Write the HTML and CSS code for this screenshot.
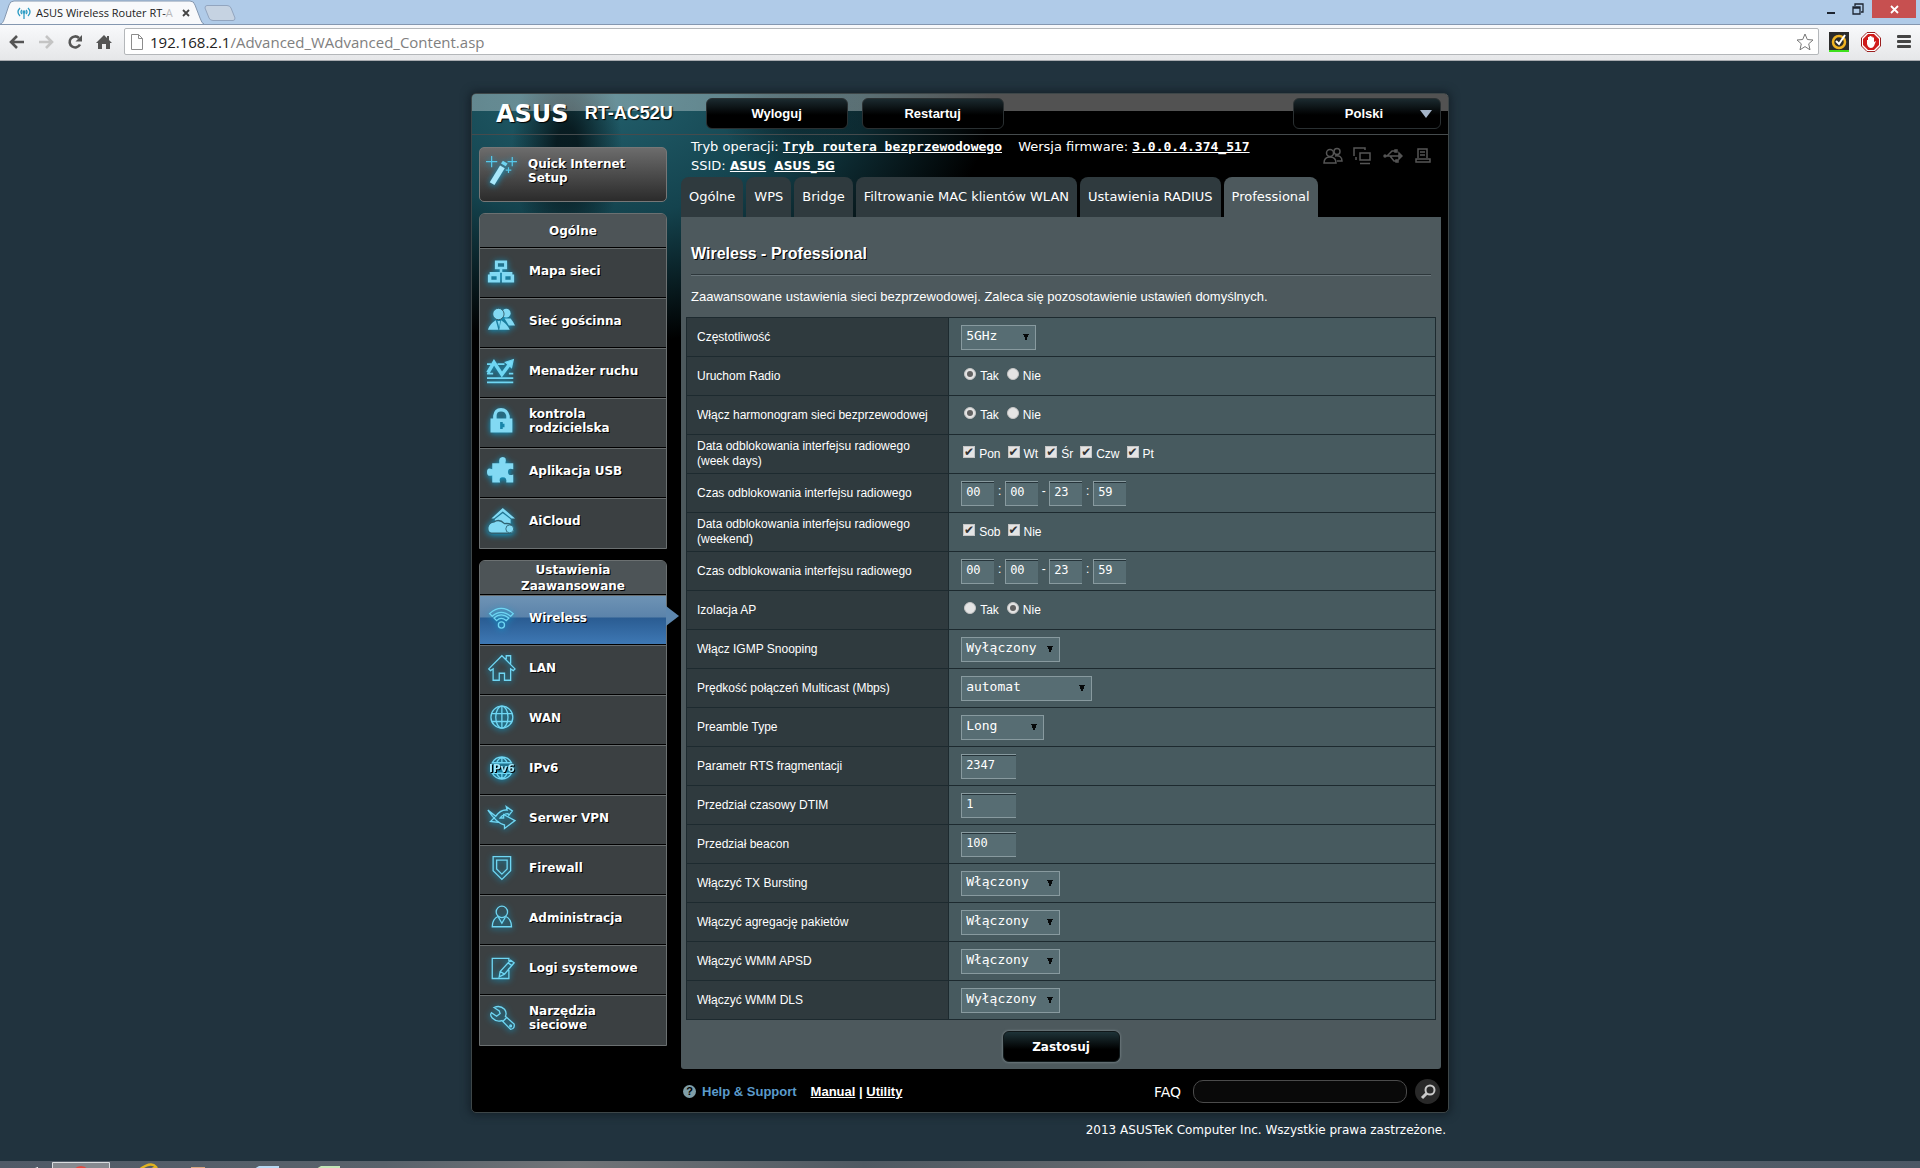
FILE: index.html
```html
<!DOCTYPE html>
<html lang="pl">
<head>
  <meta charset="UTF-8">
  <meta name="viewport" content="width=device-width, initial-scale=1.0">
  <title>ASUS Wireless Router RT-AC52U - Professional</title>
  <link rel="stylesheet" href="styles.css">
</head>
<body>
  <header class="browser">
    <div class="tab-strip">
      <div class="browser-tab">
        <svg class="tab-shape" width="204" height="24" viewBox="0 0 204 24"><path d="M0 24C3 24 4 20 6 14L9 5Q10 1 14 1H190Q194 1 195 5L200 18Q202 24 204 24" fill="#f8f9fb" stroke="#8497b0"/></svg>
        <svg class="tab-icon" width="14" height="14" viewBox="0 0 14 14" fill="none" stroke="#2d9cc4" stroke-width="1.3"><path d="M3 2Q-1 6 3 10M5 4Q3 6 5 8M11 2Q15 6 11 10M9 4Q11 6 9 8M7 7V13"/><circle cx="7" cy="6" r="1" fill="#2d9cc4"/></svg>
        <span class="tab-title">ASUS Wireless Router RT-<span class="faded">A</span></span>
        <button class="tab-close" aria-label="Close tab"><svg width="8" height="8" viewBox="0 0 8 8"><path d="M1 1L7 7M7 1L1 7" stroke="#444" stroke-width="1.8"/></svg></button>
      </div>
      <button class="new-tab" aria-label="New tab"><svg width="32" height="16" viewBox="0 0 32 16"><path d="M3 .5H23Q26 .5 27 3L31 13Q31 15.500 29 15.500H9Q6 15.500 5 13L1 3Q1 .5 3 .5" fill="#c6d3e2" stroke="#92a5bf"/></svg></button>
      <div class="window-buttons">
        <button aria-label="Minimize"><svg width="10" height="12" viewBox="0 0 10 12"><path d="M1 10H9" stroke="#1d2530" stroke-width="2"/></svg></button>
        <button aria-label="Restore"><svg width="12" height="12" viewBox="0 0 12 12" fill="none" stroke="#1d2530" stroke-width="1.300"><path d="M1 4H8V11H1ZM1 5H8M3 3V1H11V9H9"/></svg></button>
        <button class="close" aria-label="Close"><svg width="9" height="9" viewBox="0 0 9 9"><path d="M1 1L8 8M8 1L1 8" stroke="#fff" stroke-width="1.800"/></svg></button>
      </div>
    </div>
    <div class="toolbar">
      <button aria-label="Back"><svg width="16" height="16" viewBox="0 0 16 16" fill="none" stroke="#555" stroke-width="2.600"><path d="M15 8H2M8 2L2 8L8 14"/></svg></button>
      <button aria-label="Forward"><svg width="16" height="16" viewBox="0 0 16 16" fill="none" stroke="#c4c4c4" stroke-width="2.600"><path d="M1 8H14M8 2L14 8L8 14"/></svg></button>
      <button aria-label="Reload"><svg width="16" height="16" viewBox="0 0 16 16"><path d="M13 10.500A5.500 5.500 0 1 1 12 4" fill="none" stroke="#555" stroke-width="2.600"/><path d="M15 1V7.500H8.500Z" fill="#555"/></svg></button>
      <button aria-label="Home"><svg width="16" height="16" viewBox="0 0 16 16"><path d="M8 1L0 9H2V15H6V10H10V15H14V9H16L13 6V2H11V4Z" fill="#555"/></svg></button>
      <div class="address">
        <svg width="12" height="16" viewBox="0 0 12 16" fill="#fff" stroke="#8c8c8c"><path d="M.5 .5H7.500L11.500 4.500V15.500H.5ZM7.500 .5V4.500H11.500"/></svg>
        <span class="url"><b>192.168.2.1</b>/Advanced_WAdvanced_Content.asp</span>
        <svg class="star" width="18" height="18" viewBox="0 0 18 18"><path d="M9 1L11.300 6.500L17 7L12.700 10.800L14 16.800L9 13.600L4 16.800L5.300 10.800L1 7L6.700 6.500Z" fill="#fff" stroke="#777" stroke-linejoin="round"/></svg>
      </div>
      <svg class="ext" width="20" height="20" viewBox="0 0 20 20"><path fill="#2b2b2b" d="M0 0H20V18H0Z"/><path fill="#3de01c" d="M0 18H20V20H0Z"/><circle cx="10" cy="10" r="6" fill="none" stroke="#f0b323" stroke-width="2.500"/><path d="M7 9L10 12L16 3" fill="none" stroke="#fff" stroke-width="2"/></svg>
      <svg class="ext" width="20" height="20" viewBox="0 0 20 20"><path d="M6 .5H14L19.500 6V14L14 19.500H6L.5 14V6Z" fill="#fff" stroke="#9b2020"/><path d="M7 2H13L18 7V13L13 18H7L2 13V7Z" fill="#cf1b1b"/><path d="M6 8H7V5H8.500V4H10V4.500H11.500V5.500H13V10L15 9L13 14Q12 16 10 16Q7 16 6 12Z" fill="#fff"/></svg>
      <button class="menu-button" aria-label="Menu"><svg width="14" height="13" viewBox="0 0 14 13"><path d="M1 1.500H13M1 6.500H13M1 11.500H13" stroke="#444" stroke-width="2.800" stroke-linecap="round"/></svg></button>
    </div>
  </header>

  <main class="page">
    <div class="router">
      <div class="top-banner">
        <span class="logo">ASUS</span>
        <span class="model">RT-AC52U</span>
        <button class="banner-button">Wyloguj</button>
        <button class="banner-button">Restartuj</button>
        <button class="banner-button language">Polski</button>
      </div>

      <div class="router-body">
        <nav class="sidebar">
          <a class="quick-setup" href="#">
            <svg class="icon" viewBox="0 0 32 32"><path d="M4 28L15 10L20 13L9 31Z" fill="#a9e8fb"/><path d="M16 8L18 5L23 8L21 11Z" fill="#6fd3f0"/><path d="M6 0V12M0 6H12M28 1V11M23 6H33M24 12V18M21 15H27" stroke="#55c8ea" stroke-width="1.300"/></svg>
            Quick Internet Setup
          </a>

          <div class="menu">
            <h2>Ogólne</h2>
            <a href="#"><svg class="icon solid" viewBox="0 0 32 32"><path fill-rule="evenodd" d="M9 4H23V14H17.500V17H29V20H31V29H17V18H15V29H1V20H3V17H14.500V14H9ZM12.500 7V11H19.500V7ZM5 22V26H11V22ZM21 22V26H27V22Z"/></svg>Mapa sieci</a>
            <a href="#"><svg class="icon solid" viewBox="0 0 32 32"><circle cx="22" cy="7" r="5"/><path d="M20 13L27 13Q31 18 32 21H25Z"/><circle cx="13" cy="8" r="6.500" stroke="#31545f"/><path d="M10 15L13 26H1Q3 19 10 15ZM16 15L14 26H26Q23 19 16 15Z"/><path d="M12 16H15L14 23Z"/></svg>Sieć gościnna</a>
            <a href="#"><svg class="icon line" viewBox="0 0 32 32"><path d="M0 8H5M12 8H20M0 24H30M0 29H30M0 19H7M25 19H30" stroke-width="2"/><path d="M1 18L8 6L17 20L26 8" stroke-width="4"/><path d="M21 6L30 3L28 12Z" fill="#78dcf8"/></svg>Menadżer ruchu</a>
            <a href="#"><svg class="icon solid" viewBox="0 0 32 32"><path fill-rule="evenodd" d="M4 13H7V10Q8 1 16 1T26 10V13H29V29H4ZM11 13H22V10Q21 5 16 5T11 10ZM15 17V25H18V23H20V19H18V17Z"/></svg>kontrola<br>rodzicielska</a>
            <a href="#"><svg class="icon solid" viewBox="0 0 32 32"><path d="M6 7H14Q13 0 18 0T21 7H30V14Q24 12 24 17T30 20V29H22Q23 23 18 23T15 29H6V21Q0 23 0 17T6 14Z"/></svg>Aplikacja USB</a>
            <a href="#"><svg class="icon solid" viewBox="0 0 32 32"><path d="M18 1L32 13H28L18 5L8 13H5Z"/><path d="M18 7L27 14V22H9V14Z"/><path d="M5 30Q0 29 1 23Q2 18 8 17Q14 13 20 19Q28 18 30 23Q33 30 26 30Z" stroke="#2f6272" stroke-width="1.500"/><circle cx="26" cy="25" r="4.500" stroke="#2f6272"/></svg>AiCloud</a>
          </div>

          <div class="menu">
            <h2>Ustawienia Zaawansowane</h2>
            <a class="active" href="#"><svg class="icon line" viewBox="0 0 32 32"><path d="M3 11Q16 -1 30 11L27 14Q16 5 6 14ZM8 16Q16 9 25 16L22 19Q16 14 11 19Z"/><circle cx="16.500" cy="24" r="3.500"/></svg>Wireless</a>
            <a href="#"><svg class="icon line" viewBox="0 0 32 32"><path d="M2 17L17 2L32 17L30 19L27 17V30H20V22H14V30H7V17L4 19ZM22 6V2H27V11"/></svg>LAN</a>
            <a href="#"><svg class="icon line" viewBox="0 0 32 32"><circle cx="17" cy="15" r="12.500"/><path d="M17 3V27M5 11H29M5 20H29"/><ellipse cx="17" cy="15" rx="7" ry="12.500"/></svg>WAN</a>
            <a href="#"><svg class="icon line" viewBox="0 0 32 32"><path d="M6 10A12.500 12.500 0 0 1 28 10ZM6 22A12.500 12.500 0 0 0 28 22ZM17 4V10M17 22V28M11 10Q13 5 17 4Q21 5 23 10M11 22Q13 27 17 28Q21 27 23 22"/><text x="17" y="20" text-anchor="middle" class="icon-text">IPv6</text></svg>IPv6</a>
            <a href="#"><svg class="icon line" viewBox="0 0 32 32"><path d="M1 7L10 14Q16 6 23 7L22 3L29 8L25 13L24 11Q19 11 15 16H19V12L32 19L20 28V24Q11 22 1 7ZM9 15L4 20L13 21"/></svg>Serwer VPN</a>
            <a href="#"><svg class="icon line" viewBox="0 0 32 32"><path d="M7 3H27V19L17 29L7 19ZM11 7H23V17L17 23L11 17Z"/></svg>Firewall</a>
            <a href="#"><svg class="icon line" viewBox="0 0 32 32"><circle cx="17" cy="9" r="6.500"/><path d="M13 14Q6 17 6 26H28Q28 17 21 14M13 15L17 22L21 15"/></svg>Administracja</a>
            <a href="#"><svg class="icon line" viewBox="0 0 32 32"><path d="M25 16V28H6V5H25V8M14 26L15 20L27 7L31 10L20 23ZM15 20L20 23M24 10L28 13"/></svg>Logi systemowe</a>
            <a href="#"><svg class="icon line" viewBox="0 0 32 32"><path d="M8 4Q15 1 20 6Q23 10 21 14L31 23Q32 28 27 29L17 19Q11 21 6 16Q3 13 5 10L11 14L15 11L14 8ZM18 20L22 16"/><circle cx="27" cy="25" r="1"/></svg>Narzędzia<br>sieciowe</a>
          </div>
        </nav>

        <section class="content">
          <div class="status">
            <div class="status-text">
              <p>Tryb operacji: <a href="#">Tryb routera bezprzewodowego</a> <span class="firmware">Wersja firmware: <a href="#">3.0.0.4.374_517</a></span></p>
              <p>SSID: <a class="ssid" href="#">ASUS</a> <a class="ssid" href="#">ASUS_5G</a></p>
            </div>
            <div class="status-icons">
              <svg viewBox="0 0 20 18"><circle cx="7" cy="6" r="3.500"/><circle cx="14" cy="4.500" r="3"/><path d="M1 16Q1 10 7 10T13 16ZM12 9Q19 8 19 14H14"/></svg>
              <svg viewBox="0 0 20 18"><path d="M1 9V1H12V3M3 10V13M7 6H17V13H7ZM7 16.500H17"/></svg>
              <svg viewBox="0 0 20 18"><path d="M1 9H18M4 9L9 4H13M7 9L11 14H14M16 6L19 9L16 12Z"/><circle cx="2" cy="9" r="1"/><path d="M12 3H14V5H12ZM13 13H15V15H13Z"/></svg>
              <svg viewBox="0 0 20 18"><path d="M5 11V2H14V11M7 5H12M7 8H12M3 12H17V15H3Z"/></svg>
            </div>
          </div>

          <nav class="tabs">
            <a href="#">Ogólne</a>
            <a href="#">WPS</a>
            <a href="#">Bridge</a>
            <a href="#">Filtrowanie MAC klientów WLAN</a>
            <a href="#">Ustawienia RADIUS</a>
            <a class="current" href="#">Professional</a>
          </nav>

          <form class="panel">
            <h1>Wireless - Professional</h1>
            <p class="description">Zaawansowane ustawienia sieci bezprzewodowej. Zaleca się pozosotawienie ustawień domyślnych.</p>

            <table class="settings">
              <tr>
                <th><label for="band">Częstotliwość</label></th>
                <td><select id="band" class="w-band"><option>2.4GHz</option><option selected>5GHz</option></select></td>
              </tr>
              <tr>
                <th>Uruchom Radio</th>
                <td><div class="choices"><label><input type="radio" name="radio" checked>Tak</label><label><input type="radio" name="radio">Nie</label></div></td>
              </tr>
              <tr>
                <th>Włącz harmonogram sieci bezprzewodowej</th>
                <td><div class="choices"><label><input type="radio" name="schedule" checked>Tak</label><label><input type="radio" name="schedule">Nie</label></div></td>
              </tr>
              <tr>
                <th>Data odblokowania interfejsu radiowego (week days)</th>
                <td><div class="choices"><label><input type="checkbox" checked>Pon</label><label><input type="checkbox" checked>Wt</label><label><input type="checkbox" checked>Śr</label><label><input type="checkbox" checked>Czw</label><label><input type="checkbox" checked>Pt</label></div></td>
              </tr>
              <tr>
                <th>Czas odblokowania interfejsu radiowego</th>
                <td><div class="time-range"><input type="text" value="00" aria-label="Od, godzina"><span>:</span><input type="text" value="00" aria-label="Od, minuta"><span>-</span><input type="text" value="23" aria-label="Do, godzina"><span>:</span><input type="text" value="59" aria-label="Do, minuta"></div></td>
              </tr>
              <tr>
                <th>Data odblokowania interfejsu radiowego (weekend)</th>
                <td><div class="choices"><label><input type="checkbox" checked>Sob</label><label><input type="checkbox" checked>Nie</label></div></td>
              </tr>
              <tr>
                <th>Czas odblokowania interfejsu radiowego</th>
                <td><div class="time-range"><input type="text" value="00" aria-label="Weekend od, godzina"><span>:</span><input type="text" value="00" aria-label="Weekend od, minuta"><span>-</span><input type="text" value="23" aria-label="Weekend do, godzina"><span>:</span><input type="text" value="59" aria-label="Weekend do, minuta"></div></td>
              </tr>
              <tr>
                <th>Izolacja AP</th>
                <td><div class="choices"><label><input type="radio" name="isolation">Tak</label><label><input type="radio" name="isolation" checked>Nie</label></div></td>
              </tr>
              <tr>
                <th><label for="igmp">Włącz IGMP Snooping</label></th>
                <td><select id="igmp"><option>Wyłączony</option><option>Włączony</option></select></td>
              </tr>
              <tr>
                <th><label for="multicast">Prędkość połączeń Multicast (Mbps)</label></th>
                <td><select id="multicast" class="w-multicast"><option>automat</option></select></td>
              </tr>
              <tr>
                <th><label for="preamble">Preamble Type</label></th>
                <td><select id="preamble" class="w-preamble"><option>Long</option><option>Short</option></select></td>
              </tr>
              <tr>
                <th><label for="rts">Parametr RTS fragmentacji</label></th>
                <td><input type="text" id="rts" value="2347"></td>
              </tr>
              <tr>
                <th><label for="dtim">Przedział czasowy DTIM</label></th>
                <td><input type="text" id="dtim" value="1"></td>
              </tr>
              <tr>
                <th><label for="beacon">Przedział beacon</label></th>
                <td><input type="text" id="beacon" value="100"></td>
              </tr>
              <tr>
                <th><label for="burst">Włączyć TX Bursting</label></th>
                <td><select id="burst"><option>Włączony</option><option>Wyłączony</option></select></td>
              </tr>
              <tr>
                <th><label for="aggregation">Włączyć agregację pakietów</label></th>
                <td><select id="aggregation"><option>Włączony</option><option>Wyłączony</option></select></td>
              </tr>
              <tr>
                <th><label for="apsd">Włączyć WMM APSD</label></th>
                <td><select id="apsd"><option>Włączony</option><option>Wyłączony</option></select></td>
              </tr>
              <tr>
                <th><label for="dls">Włączyć WMM DLS</label></th>
                <td><select id="dls"><option>Wyłączony</option><option>Włączony</option></select></td>
              </tr>
            </table>

            <button type="button" class="apply">Zastosuj</button>
          </form>

          <div class="help-bar">
            <span class="help-icon">?</span>
            <span class="help-title">Help &amp; Support</span>
            <span class="help-links"><a href="#">Manual</a> | <a href="#">Utility</a></span>
            <label class="faq-label" for="faq">FAQ</label>
            <input type="text" id="faq" class="faq-input">
            <button class="search-button" aria-label="Szukaj"><svg width="16" height="16" viewBox="0 0 16 16" fill="none" stroke="#c9c9c9"><circle cx="10" cy="6" r="4.500" stroke-width="2"/><path d="M7 9L2 14" stroke-width="3"/></svg></button>
          </div>
        </section>
      </div>
    </div>
    <p class="copyright">2013 ASUSTeK Computer Inc. Wszystkie prawa zastrzeżone.</p>
  </main>

  <footer class="taskbar">
    <svg width="340" height="8" viewBox="0 0 340 8"><path d="M32 8L38 6V8Z" fill="#fff"/><path d="M52.500 9V1.500H109.500V9" fill="#85898f" stroke="#d9dcdf"/><path d="M74 8Q81 2 88 8Z" fill="#e2493f"/><path d="M139 9Q151 0 156 6L150 9" fill="none" stroke="#e0b321" stroke-width="2.500"/><path d="M191 6H205V8H191Z" fill="#d8a781"/><path d="M254 8L259 5H279V8Z" fill="#b9d9f3"/><path d="M316 8L321 5H341V8Z" fill="#c5e6b8"/></svg>
  </footer>
</body>
</html>
```
FILE: styles.css
```css
* {
  box-sizing: border-box;
}
body {
  display: flex;
  flex-direction: column;
  min-height: 100vh;
  margin: 0;
  background: #21333e;
  color: #fff;
  font-family: "Liberation Sans", Arial, sans-serif;
  font-size: 12px;
}
h1, h2, p {
  margin: 0;
}
a {
  color: #fff;
}
button {
  padding: 0;
  border: none;
  background: none;
  color: inherit;
  cursor: pointer;
}
svg {
  display: block;
}

/* browser window */
.browser {
  font-family: "Open Sans", "Noto Sans", sans-serif;
  color: #222;
}
.tab-strip {
  display: flex;
  align-items: flex-start;
  height: 24px;
  background: #b0cbe8;
}
.browser-tab {
  position: relative;
  display: flex;
  align-items: center;
  gap: 5px;
  width: 204px;
  height: 24px;
  padding: 1px 14px 0 17px;
}
.tab-shape {
  position: absolute;
  left: 0;
  top: 0;
}
.tab-icon, .tab-title, .tab-close {
  position: relative;
}
.tab-title {
  flex: 1;
  font-size: 11px;
  white-space: nowrap;
}
.faded {
  color: #bbb;
}
.new-tab {
  margin-top: 5px;
}
.window-buttons {
  display: flex;
  align-items: center;
  gap: 16px;
  height: 18px;
  margin-left: auto;
  padding-right: 4px;
}
.window-buttons .close {
  display: flex;
  align-items: center;
  justify-content: center;
  width: 44px;
  height: 18px;
  margin-left: -8px;
  background: #c75050;
}
.toolbar {
  display: flex;
  align-items: center;
  gap: 13px;
  height: 37px;
  padding: 0 9px 2px;
  border-top: 1px solid #8497b0;
  border-bottom: 1px solid #a9acb0;
  background: linear-gradient(#f8f9fb, #e6e7e9);
}
.address {
  display: flex;
  flex: 1;
  align-items: center;
  gap: 7px;
  height: 27px;
  margin: 0 -3px 0 -1px;
  padding: 0 4px 0 6px;
  border: 1px solid #b4b7ba;
  border-radius: 2px;
  background: #fff;
}
.url {
  flex: 1;
  color: #808080;
  font-size: 15px;
}
.url b {
  color: #222;
  font-weight: normal;
}
.toolbar .ext {
  margin-right: -1px;
}
.menu-button {
  margin-left: 4px;
}

/* router window */
.page {
  flex: 1;
  padding: 32px 20px 23px;
  background: #21333e;
}
.router {
  max-width: 978px;
  margin: 0 auto;
  border: 1px solid #3d4648;
  border-radius: 5px;
  background:
    radial-gradient(ellipse 55px 110px at 95px 55px, rgba(5, 18, 22, 0.85) 20%, transparent),
    radial-gradient(ellipse 70px 60px at 320px 20px, rgba(5, 18, 22, 0.5), transparent),
    radial-gradient(ellipse 400px 250px at 120px 0, #23616e, #14434e 50%, transparent),
    #000;
  box-shadow: 0 0 8px 2px #15212a;
}
.top-banner {
  display: flex;
  align-items: center;
  height: 41px;
  padding: 0 7px 1px 24px;
  border-bottom: 1px solid #454b4d;
  border-radius: 4px 4px 0 0;
  background: linear-gradient(rgba(255, 255, 255, 0.32) 17px, transparent 17px);
}
.logo {
  font: bold 24px "DejaVu Sans", sans-serif;
  text-shadow: 1px 1px 1px #000;
}
.model {
  flex: 0 1 121px;
  margin-left: 16px;
  font-size: 18px;
  font-weight: bold;
  text-shadow: 1px 1px 1px #000;
}
.banner-button {
  width: 142px;
  height: 31px;
  margin-right: 14px;
  border: 1px solid #2a3032;
  border-radius: 6px;
  background: linear-gradient(#1b2a2f, #000 55%);
  font: bold 13px "Liberation Sans", Arial, sans-serif;
}
.language {
  position: relative;
  width: 148px;
  margin: 0 0 0 auto;
  padding-right: 6px;
}
.language::after {
  content: "";
  position: absolute;
  top: 11px;
  right: 8px;
  border: 6px solid transparent;
  border-top: 8px solid #a4b4c8;
  border-bottom: none;
}
.router-body {
  display: flex;
  gap: 14px;
  padding: 0 7px;
}

/* left menu */
.sidebar {
  flex: 0 0 188px;
  padding-top: 12px;
  font-family: "DejaVu Sans", Verdana, sans-serif;
  font-weight: bold;
  line-height: 14px;
  text-shadow: 1px 1px 0 #000;
}
.quick-setup, .menu a {
  display: flex;
  align-items: center;
  gap: 12px;
  padding: 0 12px 0 6px;
  text-decoration: none;
}
.quick-setup {
  height: 55px;
  padding: 0 30px 8px 6px;
  border: 1px solid #777;
  border-radius: 5px;
  background: linear-gradient(#6c6c6c, #2b2b2b);
}
.icon {
  flex: 0 0 30px;
  height: 30px;
  overflow: visible;
  filter: drop-shadow(0 1px 3px #0aa3d6);
}
.solid {
  fill: #82d9f3;
}
.line {
  fill: none;
  stroke: #6fd6f3;
  stroke-width: 1.5;
}
.icon-text {
  fill: #a5e9fb;
  stroke: none;
  font-size: 12px;
}
.menu {
  margin-top: 11px;
  border: 1px solid #6b7071;
  border-radius: 6px 6px 0 0;
  background: #3b4042;
}
.menu h2 {
  display: flex;
  align-items: center;
  justify-content: center;
  height: 33px;
  padding: 0 30px;
  border-radius: 5px 5px 0 0;
  background: #4d5457;
  font-size: 12px;
  line-height: 16px;
  text-align: center;
}
.menu a {
  gap: 14px;
  height: 50px;
  padding: 0 6px 4px 7px;
  border-top: 1px solid #000;
  box-shadow: inset 0 1px #686d6e;
}
.menu a:last-child {
  height: 51px;
}
.menu .icon {
  flex-basis: 28px;
  height: 28px;
}
.menu .active {
  position: relative;
  background: linear-gradient(#6f94b5 0, #5b83aa 22px, #2a5c92 23px, #3e78b4);
}
.menu .active::after {
  content: "";
  position: absolute;
  top: 11px;
  left: 100%;
  border: 10px solid transparent;
  border-left: 13px solid #5d87af;
  border-right: none;
}

/* status and tabs */
.content {
  flex: 1;
  min-width: 0;
}
.status {
  display: flex;
  justify-content: space-between;
  height: 42px;
  padding: 2px 8px 0 10px;
  font-family: "DejaVu Sans", Verdana, sans-serif;
  font-size: 13px;
  line-height: 19px;
}
.status a {
  font: bold 13px "DejaVu Sans Mono", "Lucida Console", monospace;
}
.status .ssid {
  margin-right: 4px;
  font: bold 12px "DejaVu Sans", Verdana, sans-serif;
}
.firmware {
  margin-left: 12px;
}
.status-icons {
  display: flex;
  gap: 10px;
  padding-top: 10px;
}
.status-icons svg {
  width: 20px;
  height: 18px;
  fill: none;
  stroke: #555;
  stroke-width: 1.5;
}
.tabs {
  display: flex;
  gap: 3px;
  font-family: "DejaVu Sans", Verdana, sans-serif;
  font-size: 13px;
}
.tabs a {
  height: 40px;
  padding: 0 8px;
  border-radius: 8px 8px 0 0;
  background: #2f3a3e;
  line-height: 40px;
  text-decoration: none;
  white-space: nowrap;
}
.tabs .current {
  background: #4d595d;
}

/* settings */
.panel {
  padding: 25px 5px 7px;
  border-radius: 0 0 3px 3px;
  background: #4d595d;
}
.panel h1 {
  margin: 0 5px;
  padding-bottom: 8px;
  border-bottom: 1px solid #2d373b;
  box-shadow: 0 1px #69757a;
  font-size: 16px;
  line-height: 24px;
  text-shadow: 1px 1px 0 #000;
}
.description {
  margin: 12px 5px 10px;
  font-size: 13px;
  line-height: 20px;
}
.settings {
  width: 100%;
  border: 1px solid #1d2a2f;
  border-collapse: collapse;
}
.settings tr {
  height: 39px;
}
.settings th, .settings td {
  padding: 0 10px;
  border: 1px solid #1d2a2f;
  text-align: left;
}
.settings th {
  width: 35%;
  background: #2f3a3e;
  font-weight: normal;
  line-height: 15px;
}
.settings td {
  padding-left: 12px;
  background: #475a5f;
}
select, .panel input[type="text"] {
  display: block;
  height: 25px;
  border: 1px solid #889a9f;
  border-radius: 0;
  background-color: #576d73;
  color: #fff;
  font-family: "DejaVu Sans Mono", "Lucida Console", monospace;
}
select {
  appearance: none;
  width: 99px;
  padding: 0 0 4px 4px;
  background-image:
    linear-gradient(to bottom left, #06090a 50%, transparent 50%),
    linear-gradient(to bottom right, #06090a 50%, transparent 50%);
  background-position: right 9px top 8px, right 6px top 8px;
  background-repeat: no-repeat;
  background-size: 3px 7px;
  font-size: 13px;
}
.w-band {
  width: 75px;
}
.w-multicast {
  width: 131px;
}
.w-preamble {
  width: 83px;
}
.panel input[type="text"] {
  width: 55px;
  padding: 0 0 2px 4px;
  border-right: none;
  box-shadow: inset 0 1px #26343a;
  font-size: 12px;
}
.panel .time-range input {
  width: 33px;
}
.time-range {
  display: flex;
}
.time-range span {
  width: 11px;
  line-height: 20px;
  text-align: center;
}
.choices {
  display: flex;
  gap: 7px;
  padding-left: 2px;
}
.choices label {
  display: flex;
  align-items: flex-start;
  gap: 4px;
  line-height: 19px;
}
.choices input {
  appearance: none;
  display: grid;
  place-content: center;
  width: 12px;
  height: 12px;
  margin: 1px 0 0;
  border: 1px solid #c5c5c5;
  background: #e4e4e4;
}
.choices input[type="radio"] {
  margin-left: 1px;
  border-radius: 50%;
}
.choices input[type="radio"]:checked::before {
  content: "";
  width: 6px;
  height: 6px;
  border-radius: 50%;
  background: #626262;
}
.choices input[type="checkbox"]:checked::before {
  content: "✔";
  color: #333;
  font: 12px/10px "DejaVu Sans", sans-serif;
}
.apply {
  display: block;
  width: 117px;
  height: 31px;
  margin: 11px auto 0;
  border: 1px solid #10181a;
  border-radius: 6px;
  background: linear-gradient(#1e3338, #000 60%);
  box-shadow: 0 0 2px 1px #6a767a;
  font: bold 12px "DejaVu Sans", Verdana, sans-serif;
}

/* footer */
.help-bar {
  display: flex;
  align-items: center;
  height: 43px;
  padding: 2px 1px 0 2px;
  font-weight: bold;
}
.help-icon {
  width: 13px;
  height: 13px;
  border-radius: 50%;
  background: #7f9ea8;
  color: #000;
  font-size: 11px;
  line-height: 13px;
  text-align: center;
}
.help-title {
  margin: 0 14px 0 6px;
  color: #5b9bcb;
  font-size: 13px;
}
.help-links {
  font-size: 13px;
}
.faq-label {
  margin-left: auto;
  font: 14px "DejaVu Sans", Verdana, sans-serif;
}
.faq-input {
  width: 214px;
  height: 23px;
  margin: 0 8px 0 12px;
  border: 1px solid #4b4b4b;
  border-radius: 10px;
  background: #090909;
  color: #fff;
}
.search-button {
  display: flex;
  align-items: center;
  justify-content: center;
  width: 25px;
  height: 25px;
  border-radius: 50%;
  background: #292929;
}
.copyright {
  max-width: 978px;
  margin: 9px auto 0;
  padding-right: 3px;
  font: 12px/16px "DejaVu Sans", Verdana, sans-serif;
  text-align: right;
}
.taskbar {
  height: 8px;
  overflow: hidden;
  background: linear-gradient(to right, #505a67, #59626b 20%, #717478 30%, #4f5962 45%, #64696e 60%, #4c5865);
}
```
